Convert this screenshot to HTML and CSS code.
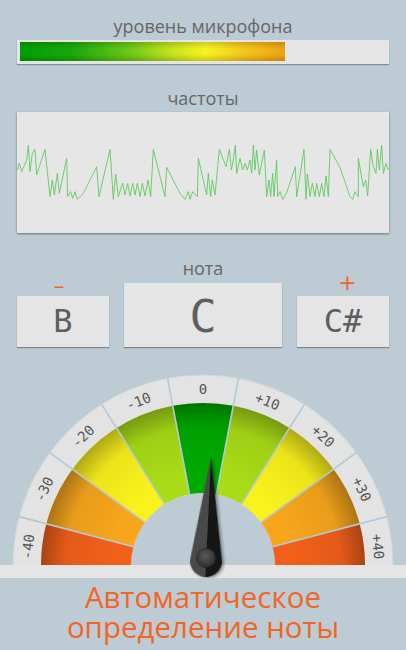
FILE: index.html
```html
<!DOCTYPE html>
<html lang="ru">
<head>
<meta charset="utf-8">
<title>Тюнер</title>
<link rel="stylesheet" href="styles.css">
</head>
<body>
<div class="screen">
  <div class="panel">
    <div class="label label-mic">уровень микрофона</div>
    <div class="meter"><div class="meter-fill" style="width:265px"></div></div>

    <div class="label label-freq">частоты</div>
    <div class="graph">
      <svg class="wave" viewBox="51 36 1116 363" preserveAspectRatio="none">
        <polyline class="wave-line" points="52,210 58,190 65,215 80,180 85,135 90,215 97,160 105,148 110,225 118,200 135,148 150,290 157,240 163,285 172,220 178,280 200,175 203,290 212,275 218,295 225,275 232,298 250,280 290,200 297,290 330,148 340,298 347,222 355,290 368,250 375,285 383,250 390,288 398,250 405,285 412,250 420,290 427,250 435,288 444,240 452,290 460,148 495,290 500,202 540,280 555,298 565,275 570,298 578,275 592,290 595,175 620,285 625,220 632,290 637,240 645,285 658,148 678,200 688,148 694,210 700,180 706,135 710,220 720,175 728,210 735,190 742,210 750,180 755,220 760,135 765,210 770,150 778,225 793,150 800,290 807,240 812,290 818,220 822,290 830,180 833,290 840,275 848,298 860,278 886,200 890,290 912,148 918,298 922,222 930,290 937,250 945,290 950,250 958,290 965,250 972,290 978,228 985,290 990,148 1020,202 1050,290 1058,298 1065,275 1075,290 1075,175 1090,260 1097,240 1103,288 1112,148 1120,200 1128,220 1132,148 1138,210 1145,135 1150,220 1158,190 1165,210"/>
      </svg>
    </div>

    <div class="label label-note">нота</div>
    <div class="notes">
      <div class="side">
        <div class="sign">–</div>
        <div class="note-box small">B</div>
      </div>
      <div class="note-box big">C</div>
      <div class="side">
        <div class="sign plus">+</div>
        <div class="note-box small">C#</div>
      </div>
    </div>
  </div>

  <svg class="gauge" viewBox="-203 -205 406 218" width="406" height="218">
    <defs>
      <path id="sec" d="M -13.43 -70.74 L -30.22 -159.16 A 162 162 0 0 1 30.22 -159.16 L 13.43 -70.74 A 72 72 0 0 0 -13.43 -70.74 Z"/>
      <line id="dv" x1="0" y1="-72" x2="0" y2="-190"/>
      <radialGradient id="shade" gradientUnits="userSpaceOnUse" cx="0" cy="0" r="162">
        <stop offset="0.55" stop-color="#000" stop-opacity="0"/>
        <stop offset="0.85" stop-color="#000" stop-opacity="0.06"/>
        <stop offset="1" stop-color="#000" stop-opacity="0.3"/>
      </radialGradient>
      <radialGradient id="pivot" cx="0.45" cy="0.4" r="0.6">
        <stop offset="0" stop-color="#5a5a5a"/>
        <stop offset="1" stop-color="#2e2e2e"/>
      </radialGradient>
      <filter id="nshadow" x="-50%" y="-20%" width="200%" height="140%">
        <feDropShadow dx="2" dy="1" stdDeviation="1.5" flood-color="#000" flood-opacity="0.4"/>
      </filter>
      <clipPath id="upper"><rect x="-203" y="-205" width="406" height="205"/></clipPath>
    </defs>

    <g clip-path="url(#upper)">
      <circle class="ring" cx="0" cy="0" r="190"/>
      <circle class="hub" cx="0" cy="0" r="72"/>
      <use href="#sec" class="c40" transform="rotate(-86)"/>
      <use href="#sec" class="c30" transform="rotate(-64.5)"/>
      <use href="#sec" class="c20" transform="rotate(-43)"/>
      <use href="#sec" class="c10" transform="rotate(-21.5)"/>
      <use href="#sec" class="c0"/>
      <use href="#sec" class="c10" transform="rotate(21.5)"/>
      <use href="#sec" class="c20" transform="rotate(43)"/>
      <use href="#sec" class="c30" transform="rotate(64.5)"/>
      <use href="#sec" class="c40" transform="rotate(86)"/>
      <path class="shade" d="M -162 0 A 162 162 0 0 1 162 0 L 72 0 A 72 72 0 0 0 -72 0 Z"/>
      <g class="dividers">
        <use href="#dv" transform="rotate(-75.25)"/>
        <use href="#dv" transform="rotate(-53.75)"/>
        <use href="#dv" transform="rotate(-32.25)"/>
        <use href="#dv" transform="rotate(-10.75)"/>
        <use href="#dv" transform="rotate(10.75)"/>
        <use href="#dv" transform="rotate(32.25)"/>
        <use href="#dv" transform="rotate(53.75)"/>
        <use href="#dv" transform="rotate(75.25)"/>
      </g>
      <g class="ticks">
        <text transform="rotate(-84) translate(0,-176)">-40</text>
        <text transform="rotate(-64.5) translate(0,-176)">-30</text>
        <text transform="rotate(-43) translate(0,-176)">-20</text>
        <text transform="rotate(-21.5) translate(0,-176)">-10</text>
        <text transform="translate(0,-176)">0</text>
        <text transform="rotate(21.5) translate(0,-176)">+10</text>
        <text transform="rotate(43) translate(0,-176)">+20</text>
        <text transform="rotate(64.5) translate(0,-176)">+30</text>
        <text transform="rotate(84) translate(0,-176)">+40</text>
      </g>
    </g>

    <rect class="strip" x="-203" y="0" width="406" height="13"/>

    <g transform="translate(3,-4) rotate(2.75)" filter="url(#nshadow)">
      <path class="needle-l" d="M 0 -104 L -16 0 A 16 16 0 0 0 0 16 Z"/>
      <path class="needle-r" d="M 0 -104 L 0 16 A 16 16 0 0 0 16 0 Z"/>
      <circle cx="0" cy="-3" r="9.5" fill="url(#pivot)" class="pivot"/>
    </g>
  </svg>

  <div class="promo">
    <span class="promo-line">Автоматическое</span>
    <span class="promo-line">определение ноты</span>
  </div>
</div>
</body>
</html>
```
FILE: styles.css
```css
html, body {
  margin: 0;
  padding: 0;
}
body {
  background: #bccbd4;
  font-family: "Open Sans", "DejaVu Sans", sans-serif;
}
.screen {
  width: 406px;
  height: 650px;
  overflow: hidden;
  display: flex;
  flex-direction: column;
}
.panel {
  padding: 0 17px;
  display: flex;
  flex-direction: column;
}
.label {
  font-size: 18px;
  line-height: 20px;
  color: #666;
  text-align: center;
}
.label-mic { margin-top: 16.3px; }
.label-freq { margin-top: 23.8px; }
.label-note { margin-top: 24.8px; }

.meter {
  margin-top: 3.7px;
  height: 24px;
  box-sizing: border-box;
  padding: 2px 3px 3px;
  background: #e5e5e5;
  box-shadow: 0 1px 1px rgba(0,0,0,0.3);
}
.meter-fill {
  height: 19px;
  background:
    linear-gradient(to bottom, rgba(0,0,0,0.16), rgba(0,0,0,0) 35%, rgba(0,0,0,0) 65%, rgba(0,0,0,0.18)),
    linear-gradient(to right, #00a000 0%, #1aa80c 20%, #70c818 42%, #c8e41c 58%, #f8f222 70%, #f4c41a 85%, #f0a014 100%);
}

.graph {
  margin-top: 4px;
  height: 121px;
  background: #e6e6e6;
  box-shadow: 0 1px 2px rgba(0,0,0,0.45);
}
.wave {
  display: block;
  width: 100%;
  height: 100%;
}
.wave-line {
  fill: none;
  stroke: #5cc85c;
  stroke-width: 2.6;
  stroke-linejoin: miter;
}

.notes {
  margin-top: 5px;
  height: 64px;
  display: flex;
  justify-content: space-between;
  align-items: flex-end;
}
.side {
  display: flex;
  flex-direction: column;
  align-items: center;
}
.sign {
  height: 13px;
  line-height: 13px;
  font-size: 22px;
  color: #f26522;
  font-family: "DejaVu Sans", sans-serif;
  margin-right: 8px;
  margin-bottom: 4px;
}
.sign.plus {
  margin-right: 0;
  margin-left: 9px;
  margin-bottom: 7px;
}
.note-box {
  background: #e5e5e5;
  box-shadow: 0 1px 1px rgba(0,0,0,0.35);
  display: flex;
  align-items: center;
  justify-content: center;
  color: #5e5e5e;
  font-family: "DejaVu Sans Mono", monospace;
}
.note-box.small {
  width: 92px;
  height: 51px;
  font-size: 32px;
}
.note-box.big {
  width: 158px;
  height: 64px;
  font-size: 45px;
  padding-top: 3px;
  box-sizing: border-box;
}

.gauge {
  display: block;
  margin-top: 13px;
}
.ring {
  fill: #e3e3e3;
  stroke: #d2d8dc;
  stroke-width: 1;
}
.hub { fill: #bccbd4; }
.c40 { fill: #f2601a; }
.c30 { fill: #f7a61c; }
.c20 { fill: #faf21c; }
.c10 { fill: #a8dc16; }
.c0 { fill: #00aa00; }
.shade { fill: url(#shade); }
.dividers {
  stroke: #b4c8d6;
  stroke-width: 1.6;
}
.ticks text {
  font-family: "DejaVu Sans Mono", monospace;
  font-size: 14px;
  fill: #555;
  text-anchor: middle;
  dominant-baseline: central;
}
.strip { fill: #e5e5e5; }
.needle-l { fill: #484848; }
.needle-r { fill: #141414; }
.pivot {
  stroke: #222;
  stroke-width: 0.8;
}

.promo {
  margin-top: 4.4px;
  font-size: 29.5px;
  line-height: 30px;
  color: #f26522;
  text-align: center;
  display: flex;
  flex-direction: column;
}
.promo-line {
  display: block;
  height: 30px;
}
```
